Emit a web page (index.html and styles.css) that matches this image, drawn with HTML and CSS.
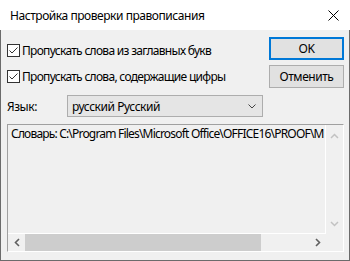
FILE: index.html
```html
<!DOCTYPE html>
<html lang="ru">
<head>
    <meta charset="UTF-8">
    <meta name="viewport" content="width=device-width, initial-scale=1.0">
    <title>Настройка проверки правописания</title>
    <link rel="stylesheet" href="styles.css">
</head>
<body>
    <div class="window">
        <div class="titlebar">
            <span class="title">Настройка проверки правописания</span>
            <svg class="close" width="11" height="11" viewBox="0 0 11 11">
                <path d="M0.5 0.5 L10.5 10.5 M10.5 0.5 L0.5 10.5" stroke="#000" stroke-width="1" fill="none"/>
            </svg>
        </div>

        <div class="dialog">
            <div class="top">
                <div class="options">
                    <label class="check">
                        <span class="box">
                            <svg width="11" height="11" viewBox="0 0 11 11">
                                <path d="M1.5 5.5 L4 8 L9.5 2.5" stroke="#333" stroke-width="1" fill="none"/>
                            </svg>
                        </span>
                        Пропускать слова из заглавных букв
                    </label>
                    <label class="check">
                        <span class="box">
                            <svg width="11" height="11" viewBox="0 0 11 11">
                                <path d="M1.5 5.5 L4 8 L9.5 2.5" stroke="#333" stroke-width="1" fill="none"/>
                            </svg>
                        </span>
                        Пропускать слова, содержащие цифры
                    </label>
                    <div class="lang">
                        <span class="lang-label">Язык:</span>
                        <div class="select">
                            <span>русский Русский</span>
                            <svg width="8" height="5" viewBox="0 0 8 5">
                                <path d="M0.5 0.5 L4 4 L7.5 0.5" stroke="#444" stroke-width="1" fill="none"/>
                            </svg>
                        </div>
                    </div>
                </div>
                <div class="buttons">
                    <button class="btn btn-default">OK</button>
                    <button class="btn">Отменить</button>
                </div>
            </div>

            <div class="listbox">
                <div class="list-main">
                    <div class="list-content">
                        <div class="line">Словарь: C:\Program Files\Microsoft Office\OFFICE16\PROOF\M</div>
                    </div>
                    <div class="vscroll">
                        <svg width="9" height="6" viewBox="0 0 9 6">
                            <path d="M1 5 L4.5 1.5 L8 5" stroke="#c2c2c2" stroke-width="1.5" fill="none"/>
                        </svg>
                        <svg width="9" height="6" viewBox="0 0 9 6">
                            <path d="M1 1 L4.5 4.5 L8 1" stroke="#c2c2c2" stroke-width="1.5" fill="none"/>
                        </svg>
                    </div>
                </div>
                <div class="hscroll">
                    <div class="arrow">
                        <svg width="6" height="9" viewBox="0 0 6 9">
                            <path d="M5 1 L1.5 4.5 L5 8" stroke="#606060" stroke-width="1.6" fill="none"/>
                        </svg>
                    </div>
                    <div class="track">
                        <div class="thumb"></div>
                    </div>
                    <div class="arrow">
                        <svg width="6" height="9" viewBox="0 0 6 9">
                            <path d="M1 1 L4.5 4.5 L1 8" stroke="#606060" stroke-width="1.6" fill="none"/>
                        </svg>
                    </div>
                    <div class="corner"></div>
                </div>
            </div>
        </div>
    </div>
</body>
</html>
```

FILE: styles.css
```css
body {
    margin: 0;
    font-family: 'Noto Sans', sans-serif;
    font-size: 12px;
    letter-spacing: -0.45px;
    color: #000;
}
.window {
    width: 350px;
    height: 261px;
    display: flex;
    flex-direction: column;
    background: #fff;
}
.titlebar {
    height: 30px;
    display: flex;
    align-items: center;
    justify-content: space-between;
    padding: 0 11px 0 10px;
    background: #fff;
}
.title {
    font-size: 12px;
}
.close {
    display: block;
}
.dialog {
    flex: 1;
    display: flex;
    flex-direction: column;
    background: #f0f0f0;
    border: 1px solid #6b6b6b;
    border-top: none;
    padding: 7px 5px 0 6px;
}
.top {
    display: flex;
    justify-content: space-between;
}
.options {
    display: flex;
    flex-direction: column;
}
.check {
    height: 26px;
    display: flex;
    align-items: center;
    gap: 2px;
    white-space: nowrap;
    letter-spacing: -0.7px;
}
.box {
    width: 13px;
    height: 13px;
    box-sizing: border-box;
    border: 1px solid #333;
    background: #fff;
    display: flex;
}
.box svg {
    display: block;
}
.lang {
    display: flex;
    align-items: center;
    margin-top: 6px;
}
.lang-label {
    width: 60px;
}
.select {
    width: 196px;
    height: 22px;
    box-sizing: border-box;
    border: 1px solid #adadad;
    background: #e5e5e5;
    display: flex;
    align-items: center;
    justify-content: space-between;
    padding: 0 6px 0 4px;
}
.select svg {
    display: block;
}
.buttons {
    display: flex;
    flex-direction: column;
    gap: 5px;
}
.btn {
    width: 75px;
    height: 23px;
    box-sizing: border-box;
    border: 1px solid #adadad;
    background: #e1e1e1;
    font-family: inherit;
    font-size: 12px;
    letter-spacing: inherit;
    color: #000;
    padding: 0;
}
.btn-default {
    border: 2px solid #0078d7;
}
.listbox {
    margin-top: 7px;
    height: 128px;
    box-sizing: border-box;
    border: 1px solid #a0a0a0;
    border-right-color: #fff;
    border-bottom-color: #fff;
    display: flex;
    flex-direction: column;
}
.list-main {
    flex: 1;
    display: flex;
    min-height: 0;
}
.list-content {
    flex: 1;
    min-width: 0;
    overflow: hidden;
    border-right: 1px solid #fff;
    border-bottom: 1px solid #fff;
    padding: 1px 0 0 3px;
}
.line {
    white-space: nowrap;
    line-height: 15px;
    letter-spacing: -0.8px;
}
.vscroll {
    width: 17px;
    display: flex;
    flex-direction: column;
    justify-content: space-between;
    align-items: center;
    padding: 8px 0 7px;
    box-sizing: border-box;
}
.vscroll svg {
    display: block;
}
.hscroll {
    height: 17px;
    display: flex;
}
.arrow {
    width: 17px;
    display: flex;
    align-items: center;
    justify-content: center;
}
.arrow svg {
    display: block;
}
.track {
    flex: 1;
    display: flex;
}
.thumb {
    width: 236px;
    background: #cdcdcd;
}
.corner {
    width: 17px;
}
```
